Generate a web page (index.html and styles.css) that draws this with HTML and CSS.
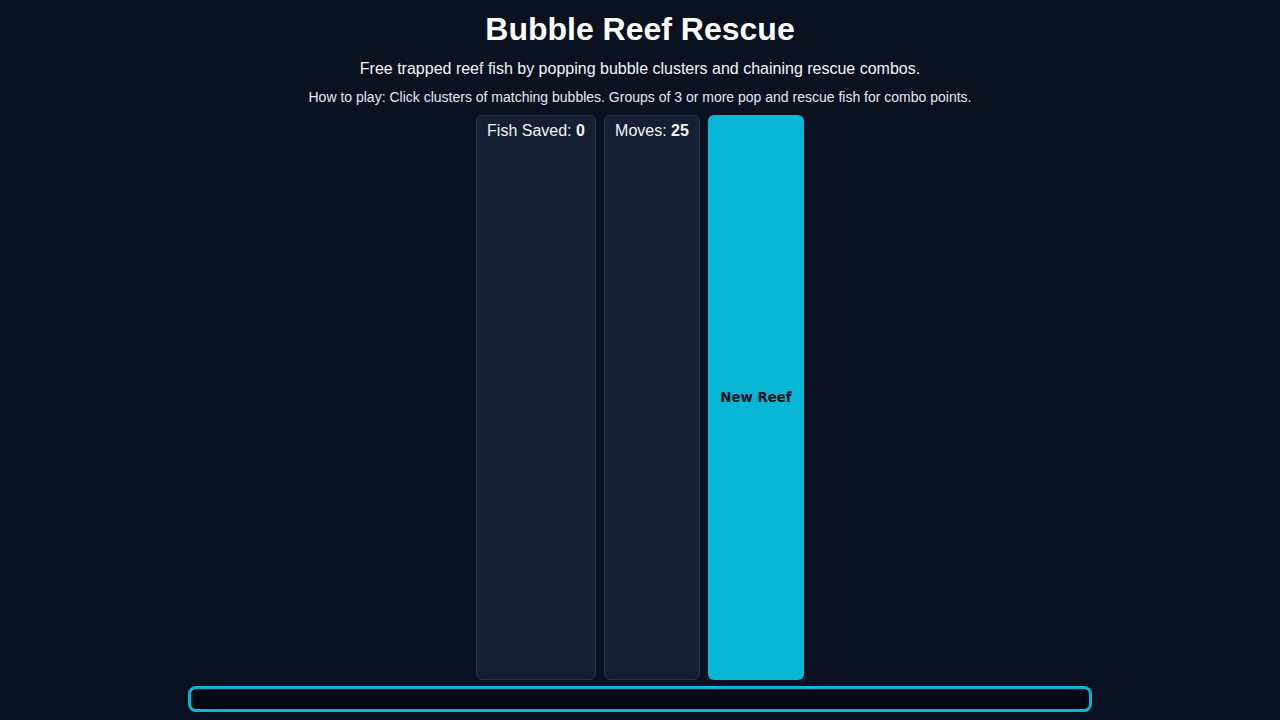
FILE: index.html
```html
<!DOCTYPE html>
<html lang="en">
<head>
    <meta charset="UTF-8">
    <meta name="viewport" content="width=device-width, initial-scale=1.0">
    <title>Bubble Reef Rescue</title>
    <link rel="stylesheet" href="styles.css">
</head>
<body>
    <div class="page">
        <h1>Bubble Reef Rescue</h1>
        <p class="tagline">Free trapped reef fish by popping bubble clusters and chaining rescue combos.</p>
        <p class="howto">How to play: Click clusters of matching bubbles. Groups of 3 or more pop and rescue fish for combo points.</p>
        <div class="hud">
            <div class="stat stat-wide">Fish Saved: <b id="saved">0</b></div>
            <div class="stat">Moves: <b id="moves">25</b></div>
            <button class="button" onclick="newReef()">New Reef</button>
        </div>
        <div id="board" class="board"></div>
    </div>
    <script>
        function newReef() {
            document.getElementById('saved').innerText = 0;
            document.getElementById('moves').innerText = 25;
        }
    </script>
</body>
</html>
```

FILE: styles.css
```css
body {
    margin: 0;
    background-color: #0a1120;
    color: #f1f5f9;
    font-family: "Liberation Sans", Arial, sans-serif;
}
.page {
    height: 720px;
    box-sizing: border-box;
    padding: 11px 0 8px;
    display: flex;
    flex-direction: column;
    align-items: center;
    text-align: center;
}
h1 {
    margin: 0 0 12px;
    font-size: 32px;
    line-height: 37px;
    color: #ffffff;
}
.tagline {
    margin: 0 0 11px;
    font-size: 16px;
    line-height: 18px;
}
.howto {
    margin: 0 0 10px;
    font-size: 14px;
    line-height: 16px;
    color: #e2e8f0;
}
.hud {
    flex: 1;
    display: flex;
    gap: 8px;
    margin-bottom: 6px;
}
.stat {
    width: 96px;
    box-sizing: border-box;
    padding: 6px 10px;
    background-color: #131f33;
    border: 1px solid #263246;
    border-radius: 6px;
    font-size: 16px;
    line-height: 18px;
}
.stat-wide {
    width: 120px;
}
.button {
    width: 96px;
    border: none;
    border-radius: 6px;
    background-color: #06b6d4;
    color: #0a1120;
    font-family: "DejaVu Sans", sans-serif;
    font-weight: bold;
    font-size: 13.33px;
    cursor: pointer;
}
.board {
    width: 904px;
    height: 26px;
    box-sizing: border-box;
    border: 3px solid #06b6d4;
    border-radius: 8px;
    background-color: #030816;
}
```
